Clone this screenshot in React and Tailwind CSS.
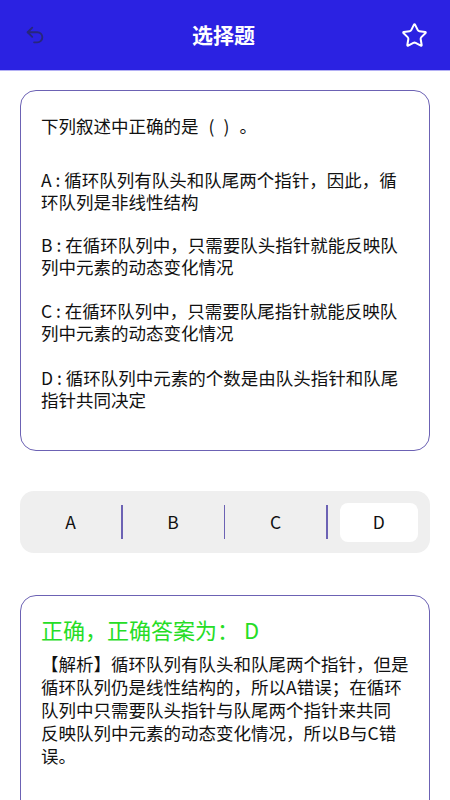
import React from "react";

const font = { fontFamily: '"Noto Sans CJK SC", "Noto Sans", sans-serif' };

function Line({ children }) {
  return <span className="block whitespace-nowrap">{children}</span>;
}

function Seg({ label, divider }) {
  return (
    <div className="flex items-center h-full">
      <div className="flex-1 text-center">{label}</div>
      {divider && <div className="w-[1.5px] h-[34px] bg-[#6c62b4]" />}
    </div>
  );
}

export default function App() {
  return (
    <div className="w-[450px] h-[800px] bg-white overflow-hidden text-[#111]" style={font}>
      <div className="h-[71px] bg-[#2b22e2] border-b border-[#b4b0f4] flex items-center justify-between pl-[24px] pr-[22px]">
        <svg width="22" height="22" viewBox="0 0 24 24" fill="none" stroke="#27277c" strokeWidth="2" strokeLinecap="round" strokeLinejoin="round">
          <path d="M9 14 4 9l5-5" />
          <path d="M4 9h10.5a5.5 5.5 0 0 1 5.5 5.5a5.5 5.5 0 0 1-5.5 5.5H11" />
        </svg>
        <div className="text-white text-[21px] font-bold">选择题</div>
        <svg width="27" height="27" viewBox="0 0 24 24" fill="none" stroke="#ffffff" strokeWidth="1.8" strokeLinecap="round" strokeLinejoin="round">
          <path d="M11.525 2.295a.53.53 0 0 1 .95 0l2.31 4.679a2.123 2.123 0 0 0 1.595 1.16l5.166.756a.53.53 0 0 1 .294.904l-3.736 3.638a2.123 2.123 0 0 0-.611 1.878l.882 5.14a.53.53 0 0 1-.771.56l-4.618-2.428a2.122 2.122 0 0 0-1.973 0L6.396 21.01a.53.53 0 0 1-.77-.56l.881-5.139a2.122 2.122 0 0 0-.611-1.879L2.16 9.795a.53.53 0 0 1 .294-.906l5.165-.755a2.122 2.122 0 0 0 1.597-1.16z" />
        </svg>
      </div>

      <div className="px-[20px] pt-[19px]">
        <div className="h-[361px] border border-[#6c62b4] rounded-[16px] px-[20px] pt-[24px] text-[17.5px] leading-[22px]">
          <div className="mb-[32px] whitespace-nowrap">
            下列叙述中正确的是
            <span className="inline-block w-[16px] text-right">(</span>
            <span className="inline-block w-[9px]" />
            <span className="inline-block w-[16px] text-left">)</span>
            <span className="inline-block w-[17px] text-left">。</span>
          </div>
          <div className="mb-[21px]">
            <Line>A : 循环队列有队头和队尾两个指针，因此，循</Line>
            <Line>环队列是非线性结构</Line>
          </div>
          <div className="mb-[22px]">
            <Line>B : 在循环队列中，只需要队头指针就能反映队</Line>
            <Line>列中元素的动态变化情况</Line>
          </div>
          <div className="mb-[23px]">
            <Line>C : 在循环队列中，只需要队尾指针就能反映队</Line>
            <Line>列中元素的动态变化情况</Line>
          </div>
          <div>
            <Line>D : 循环队列中元素的个数是由队头指针和队尾</Line>
            <Line>指针共同决定</Line>
          </div>
        </div>

        <div className="mt-[40px] h-[62px] bg-[#efefef] rounded-[14px] grid grid-cols-4 text-[17.5px]">
          <Seg label="A" divider />
          <Seg label="B" divider />
          <Seg label="C" divider />
          <div className="flex items-center justify-center px-[12px]">
            <div className="w-full h-[39px] bg-white rounded-[8px] flex items-center justify-center">D</div>
          </div>
        </div>

        <div className="mt-[42px] h-[260px] border border-[#6c62b4] rounded-[16px] px-[20px] pt-[18px]">
          <div className="text-[22px] leading-[30px] text-[#26dd26] whitespace-nowrap">
            正确，正确答案为：<span className="inline-block w-[5px]" />D
          </div>
          <div className="mt-[8px] text-[17.5px] leading-[23px]">
            <Line>【解析】循环队列有队头和队尾两个指针，但是</Line>
            <Line>循环队列仍是线性结构的，所以A错误；在循环</Line>
            <Line>队列中只需要队头指针与队尾两个指针来共同</Line>
            <Line>反映队列中元素的动态变化情况，所以B与C错</Line>
            <Line>误。</Line>
          </div>
        </div>
      </div>
    </div>
  );
}
